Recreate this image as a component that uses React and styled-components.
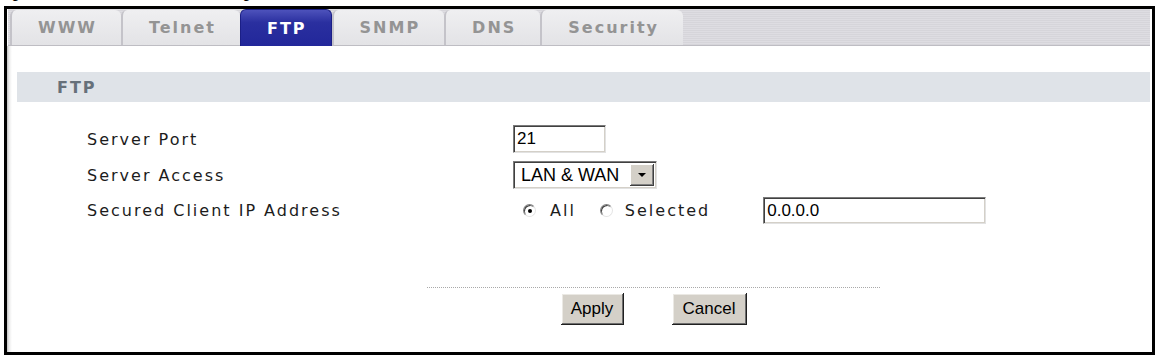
import React from 'react';
import styled, { createGlobalStyle, css } from 'styled-components';

const GlobalStyle = createGlobalStyle`
  html, body { margin: 0; padding: 0; background: #fff; }
  body { font-family: "DejaVu Sans", Verdana, sans-serif; }
`;

const Page = styled.div`
  width: 1159px;
  height: 356px;
  overflow: hidden;
`;

const Caption = styled.div`
  height: 6px;
  overflow: hidden;
`;

const CaptionLine = styled.div`
  display: flex;
  margin-top: -13px;
  font: bold 13px/14px "Liberation Sans", Arial, sans-serif;
  color: #000;
  white-space: nowrap;
`;

const FigureNo = styled.span`
  width: 158px;
  flex: none;
`;

const Frame = styled.div`
  margin-left: 4px;
  width: 1151px;
  height: 349px;
  box-sizing: border-box;
  border: 3px solid #000;
  display: flex;
  flex-direction: column;
  background: #fff;
`;

const TabStrip = styled.div`
  height: 37px;
  flex: none;
  box-sizing: border-box;
  margin: 0 2px 0 1px;
  padding-left: 2px;
  display: flex;
  align-items: flex-end;
  background: repeating-linear-gradient(to bottom, #dedde2 0 1px, #d6d5da 1px 2px);
  border-bottom: 1px solid #bebdc3;
`;

const Tab = styled.div`
  box-sizing: border-box;
  padding: 0 24px 0 26px;
  display: flex;
  align-items: center;
  justify-content: center;
  font: bold 16px "DejaVu Sans", Verdana, sans-serif;
  letter-spacing: 2px;
  border-radius: 6px 6px 0 0;
  ${p => p.$active ? css`
    height: 37px;
    margin-bottom: -1px;
    background: linear-gradient(#4d52bb, #2a2f9f 35%, #22279a);
    color: #fff;
    border: 1px solid #1b1f86;
    border-bottom: none;
  ` : css`
    height: 35px;
    background: linear-gradient(#efeff1, #e3e3e6);
    color: #949494;
    border-left: 2px solid #c4c3c9;
  `}
`;

const Content = styled.div`
  flex: 1;
  display: flex;
  flex-direction: column;
  background: linear-gradient(to right, #c0c0c0 0, #ebebeb 2px, #fff 5px);
`;

const SectionBar = styled.div`
  margin: 26px 2px 0 10px;
  height: 30px;
  display: flex;
  align-items: center;
  padding-left: 40px;
  background: #dfe3e8;
`;

const SectionTitle = styled.span`
  font: bold 16px "DejaVu Sans", Verdana, sans-serif;
  letter-spacing: 2px;
  color: #66707a;
`;

const Form = styled.div`
  display: grid;
  grid-template-columns: 426px auto;
  row-gap: 8px;
  align-items: center;
  margin-top: 23px;
  padding-left: 80px;
`;

const Label = styled.div`
  font: 16px "DejaVu Sans", Verdana, sans-serif;
  letter-spacing: 2px;
  color: #1c1c1c;
`;

const sunken = css`
  box-sizing: border-box;
  background: #fff;
  border: 1px solid;
  border-color: #7a7a7a #e2e2e2 #e2e2e2 #7a7a7a;
  box-shadow: inset 1px 1px 0 #404040, inset -1px -1px 0 #d4d0c8;
`;

const TextField = styled.input`
  ${sunken};
  width: ${p => p.$w}px;
  height: ${p => p.$h || 28}px;
  margin: 0 0 0 ${p => p.$ml || 0}px;
  padding: 0 3px;
  font: 17px "Liberation Sans", Arial, sans-serif;
  color: #000;
  outline: none;
`;

const SelectBox = styled.div`
  ${sunken};
  width: 144px;
  height: 28px;
  padding: 2px;
  display: flex;
`;

const SelectValue = styled.span`
  flex: 1;
  display: flex;
  align-items: center;
  padding-left: 5px;
  font: 18px "Liberation Sans", Arial, sans-serif;
  color: #000;
  white-space: nowrap;
`;

const SelectArrow = styled.span`
  width: 24px;
  display: flex;
  align-items: center;
  justify-content: center;
  background: #d4d0c8;
  box-shadow: inset -1px -1px 0 #404040, inset 1px 1px 0 #fff, inset -2px -2px 0 #808080;
  &::after {
    content: "";
    border-left: 4px solid transparent;
    border-right: 4px solid transparent;
    border-top: 4px solid #000;
  }
`;

const RadioRow = styled.div`
  display: flex;
  align-items: center;
`;

const RadioOption = styled.label`
  display: flex;
  align-items: center;
  gap: ${p => p.$gap}px;
  margin-left: ${p => p.$ml}px;
  font: 16px "DejaVu Sans", Verdana, sans-serif;
  letter-spacing: 2px;
  color: #1c1c1c;
`;

const Radio = styled.span`
  position: relative;
  width: 13px;
  height: 13px;
  box-sizing: border-box;
  border-radius: 50%;
  background: #fff;
  border: 1px solid;
  border-color: #808080 #e4e4e4 #e4e4e4 #808080;
  box-shadow: inset 1px 1px 0 #404040;
  ${p => p.$checked && css`
    &::after {
      content: "";
      position: absolute;
      left: 3.5px;
      top: 3.5px;
      width: 4px;
      height: 4px;
      border-radius: 50%;
      background: #000;
    }
  `}
`;

const Actions = styled.div`
  margin: 63px 0 0 420px;
  width: 453px;
`;

const Divider = styled.div`
  border-top: 1px dotted #a9a9a9;
`;

const ButtonRow = styled.div`
  margin-top: 5px;
  display: flex;
  justify-content: center;
  gap: 48px;
`;

const Button = styled.button`
  width: ${p => p.$w}px;
  height: 32px;
  margin: 0;
  padding: 0;
  border: none;
  background: #d4d0c8;
  box-shadow: inset -1px -1px 0 #202020, inset 1px 1px 0 #fff, inset -2px -2px 0 #6e6e6e, inset 2px 2px 0 #ebe9e4;
  font: 17px "Liberation Sans", Arial, sans-serif;
  color: #000;
`;

const tabs = ['WWW', 'Telnet', 'FTP', 'SNMP', 'DNS', 'Security'];

export default function App() {
  return (
    <Page>
      <GlobalStyle />
      <Caption>
        <CaptionLine>
          <FigureNo>Figure 100</FigureNo>
          <span>Remote Management: FTP</span>
        </CaptionLine>
      </Caption>
      <Frame>
        <TabStrip>
          {tabs.map(t => (
            <Tab key={t} $active={t === 'FTP'}>{t}</Tab>
          ))}
        </TabStrip>
        <Content>
          <SectionBar>
            <SectionTitle>FTP</SectionTitle>
          </SectionBar>
          <Form>
            <Label>Server Port</Label>
            <div><TextField $w={93} defaultValue="21" readOnly /></div>
            <Label>Server Access</Label>
            <div>
              <SelectBox role="combobox">
                <SelectValue>LAN &amp; WAN</SelectValue>
                <SelectArrow />
              </SelectBox>
            </div>
            <Label>Secured Client IP Address</Label>
            <RadioRow>
              <RadioOption $ml={10} $gap={14}><Radio $checked />All</RadioOption>
              <RadioOption $ml={24} $gap={12}><Radio />Selected</RadioOption>
              <TextField $w={223} $h={27} $ml={53} defaultValue="0.0.0.0" readOnly />
            </RadioRow>
          </Form>
          <Actions>
            <Divider />
            <ButtonRow>
              <Button $w={63}>Apply</Button>
              <Button $w={75}>Cancel</Button>
            </ButtonRow>
          </Actions>
        </Content>
      </Frame>
    </Page>
  );
}
